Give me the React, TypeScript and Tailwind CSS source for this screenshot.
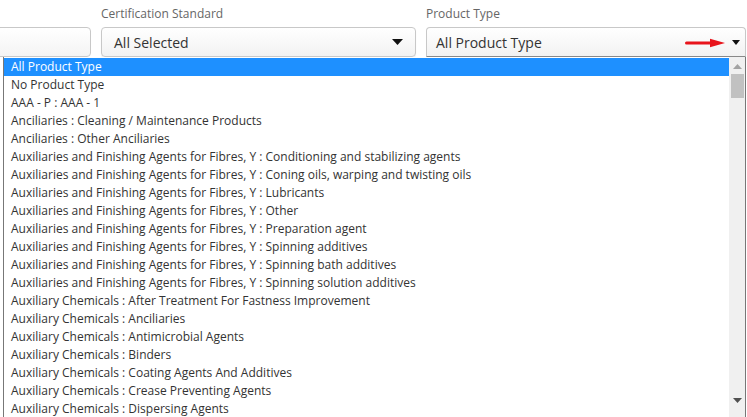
import React from "react";

const items = [
  "All Product Type",
  "No Product Type",
  "AAA - P : AAA - 1",
  "Anciliaries : Cleaning / Maintenance Products",
  "Anciliaries : Other Anciliaries",
  "Auxiliaries and Finishing Agents for Fibres, Y : Conditioning and stabilizing agents",
  "Auxiliaries and Finishing Agents for Fibres, Y : Coning oils, warping and twisting oils",
  "Auxiliaries and Finishing Agents for Fibres, Y : Lubricants",
  "Auxiliaries and Finishing Agents for Fibres, Y : Other",
  "Auxiliaries and Finishing Agents for Fibres, Y : Preparation agent",
  "Auxiliaries and Finishing Agents for Fibres, Y : Spinning additives",
  "Auxiliaries and Finishing Agents for Fibres, Y : Spinning bath additives",
  "Auxiliaries and Finishing Agents for Fibres, Y : Spinning solution additives",
  "Auxiliary Chemicals : After Treatment For Fastness Improvement",
  "Auxiliary Chemicals : Anciliaries",
  "Auxiliary Chemicals : Antimicrobial Agents",
  "Auxiliary Chemicals : Binders",
  "Auxiliary Chemicals : Coating Agents And Additives",
  "Auxiliary Chemicals : Crease Preventing Agents",
  "Auxiliary Chemicals : Dispersing Agents",
];

export default function App() {
  return (
    <div
      className="relative w-[747px] h-[417px] overflow-hidden bg-white"
      style={{ fontFamily: '"Open Sans", "Liberation Sans", sans-serif' }}
    >
      <div className="flex pt-[5px]">
        <div className="w-[101px] ml-[-10px] pt-[22px]">
          <div className="h-[30px] rounded-[4px] border border-[#c8c8c8] bg-gradient-to-b from-white to-[#f4f4f4]" />
        </div>
        <div className="w-[315px] ml-[10px] flex flex-col">
          <div className="text-[12px] leading-[18px] text-[#666] h-[22px]">Certification Standard</div>
          <div className="h-[30px] rounded-[4px] border border-[#c8c8c8] bg-gradient-to-b from-white to-[#f2f2f2] flex items-center pl-[12px] pr-[12px] shadow-[0_1px_1px_rgba(0,0,0,0.08)]">
            <span className="text-[14px] text-[#333] flex-1 pt-[1px]">All Selected</span>
            <svg width="11" height="6" viewBox="0 0 11 6">
              <polygon points="0,0 11,0 5.5,6" fill="#111" />
            </svg>
          </div>
        </div>
        <div className="w-[320px] ml-[10px] flex flex-col">
          <div className="text-[12px] leading-[18px] text-[#666] h-[22px]">Product Type</div>
          <div className="h-[30px] rounded-t-[4px] border border-[#c8c8c8] border-b-[#888] bg-gradient-to-b from-white to-[#f2f2f2] flex items-center pl-[9px] pr-[5px]">
            <span className="text-[14px] text-[#333] flex-1">All Product Type</span>
            <svg width="41" height="10" viewBox="0 0 41 10" className="mr-[6px] mt-[1px]">
              <line x1="1.5" y1="5" x2="28" y2="5" stroke="#e8141b" strokeWidth="3" strokeLinecap="round" />
              <polygon points="25,0.8 40,5 25,9.2" fill="#e8141b" />
            </svg>
            <svg width="8" height="5" viewBox="0 0 8 5">
              <polygon points="0,0 8,0 4,5" fill="#111" />
            </svg>
          </div>
        </div>
      </div>

      <div className="absolute left-[3px] top-[57px] w-[743px] h-[370px] border-l border-r border-[#777] bg-white flex">
        <div className="flex-1 pt-[1px]">
          {items.map((t, i) => (
            <div
              key={i}
              className={
                "h-[18px] leading-[18px] text-[12px] pl-[7px] whitespace-nowrap " +
                (i === 0 ? "bg-[#1e90ff] text-white" : "text-[#333]")
              }
            >
              {t}
            </div>
          ))}
        </div>
        <div className="w-[16px] bg-[#f0f0f0] flex flex-col items-center">
          <div className="h-[17px] w-full flex items-center justify-center pt-[2px]">
            <svg width="9" height="5" viewBox="0 0 9 5">
              <polygon points="0,5 9,5 4.5,0" fill="#a3a3a3" />
            </svg>
          </div>
          <div className="w-[13px] h-[24px] bg-[#c1c1c1]" />
          <div className="flex-1" />
          <div className="h-[24px] w-full flex items-start justify-center pt-[5px] mb-[10px]">
            <svg width="9" height="5" viewBox="0 0 9 5">
              <polygon points="0,0 9,0 4.5,5" fill="#505050" />
            </svg>
          </div>
        </div>
      </div>
    </div>
  );
}
